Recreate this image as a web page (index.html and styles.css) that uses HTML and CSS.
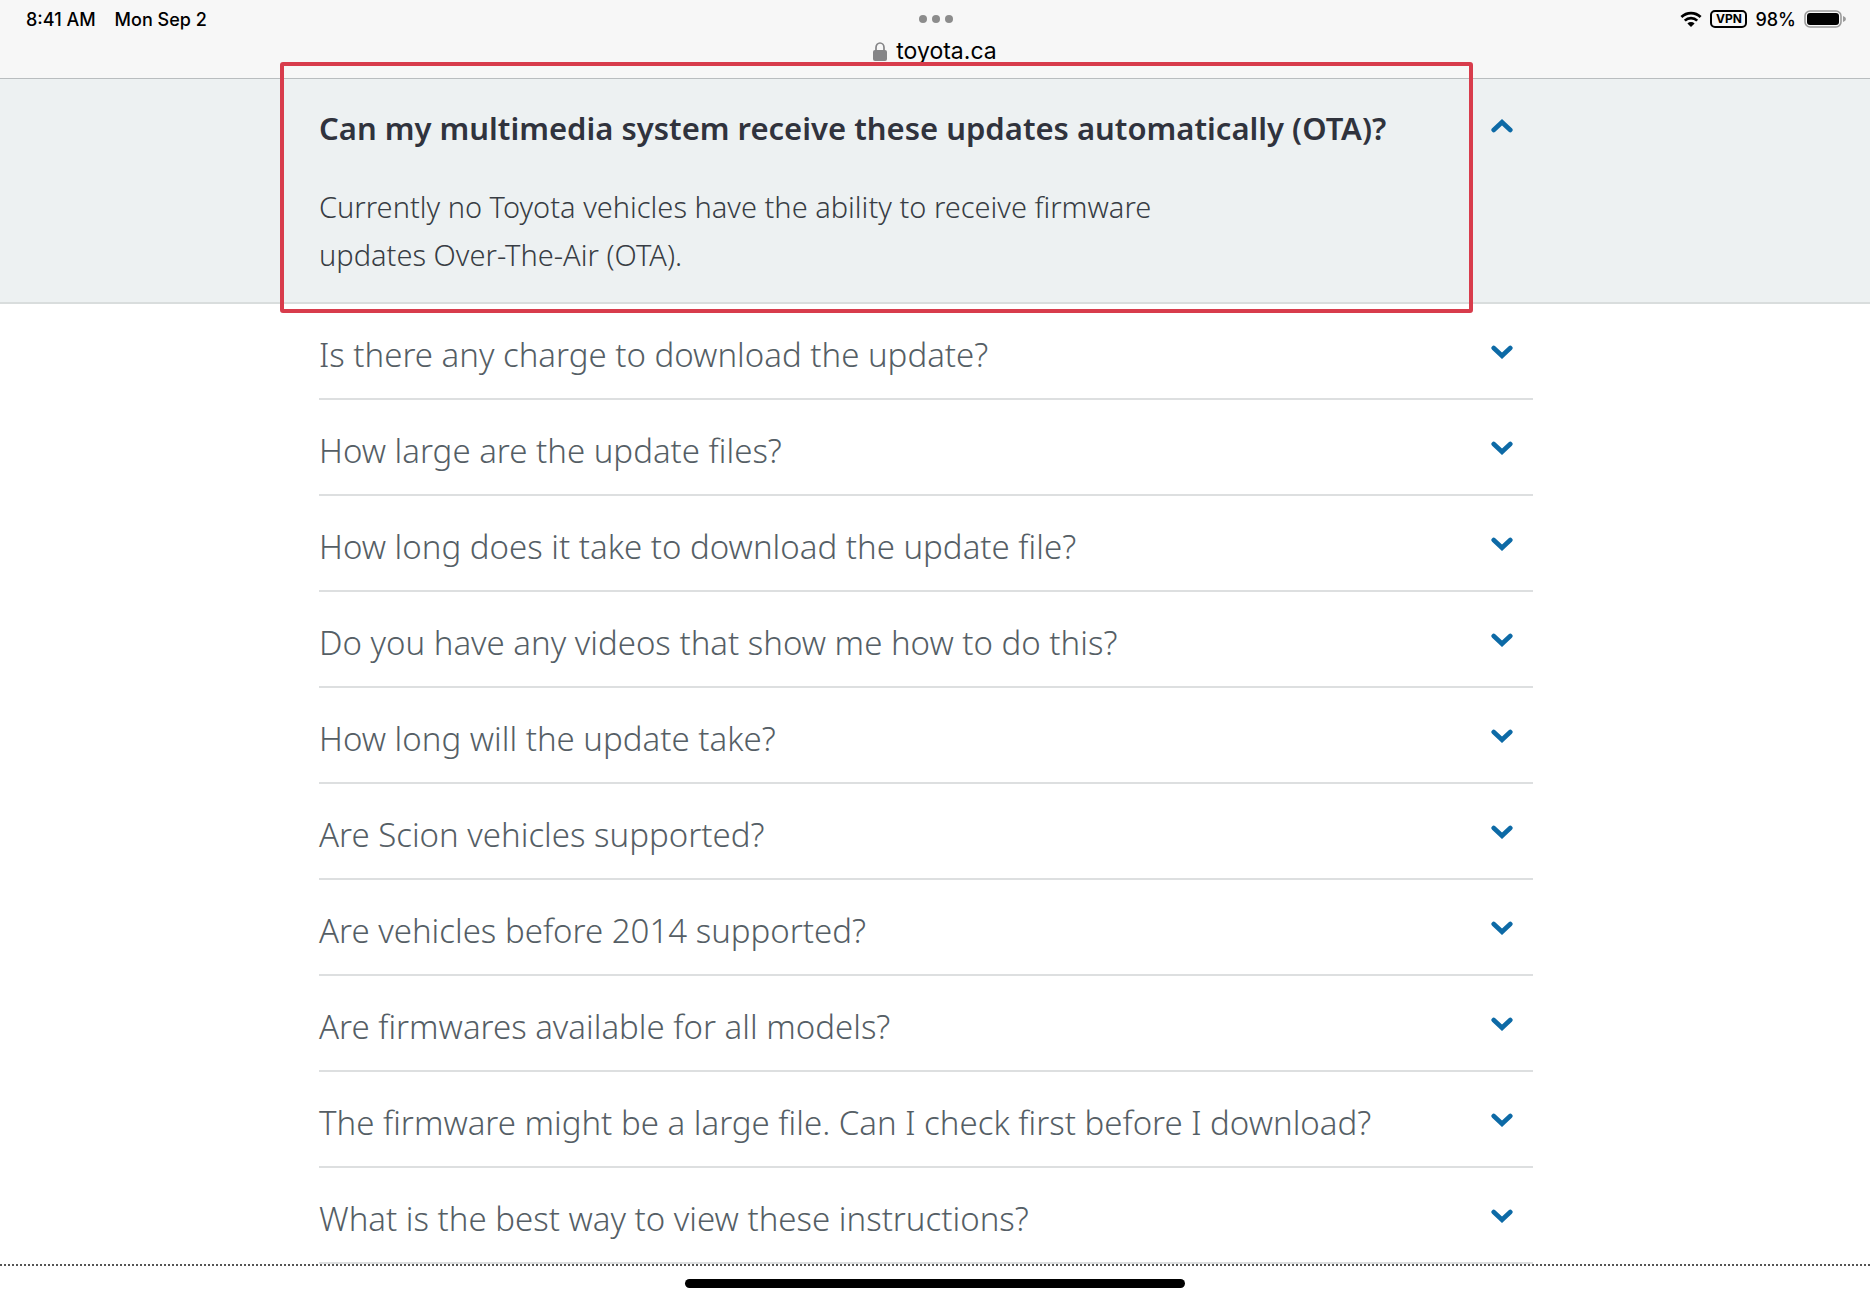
FILE: index.html
```
<!DOCTYPE html>
<html lang="en">
<head>
<meta charset="utf-8">
<meta name="viewport" content="width=device-width, initial-scale=1">
<title>toyota.ca</title>
<link rel="stylesheet" href="styles.css">
</head>
<body>
<svg class="sprite" aria-hidden="true">
  <symbol id="chevron" viewBox="0 0 22 14">
    <path d="M2.7 3 11 10.8 19.3 3" fill="none" stroke="currentColor" stroke-width="4.6" stroke-linecap="round"/>
  </symbol>
</svg>

<header class="browser-bar">
  <div class="status">
    <div class="status-left"><span>8:41 AM</span><span>Mon Sep 2</span></div>
    <button class="dots" aria-label="Window controls"><i></i><i></i><i></i></button>
    <div class="status-right">
      <svg class="wifi" viewBox="0 0 22 16" aria-label="Wi-Fi">
        <path d="M1.4 6A13.6 13.6 0 0 1 20.6 6M4.8 9.6A8.8 8.8 0 0 1 17.2 9.6" fill="none" stroke="#000" stroke-width="2.7"/>
        <path d="M11 16 7.4 12.4A5.1 5.1 0 0 1 14.6 12.4Z" fill="#000"/>
      </svg>
      <span class="vpn">VPN</span>
      <span>98%</span>
      <svg class="battery" viewBox="0 0 42 18" aria-hidden="true">
        <rect x="1" y="1" width="36" height="16" rx="5" fill="none" stroke="#9b9b9b" stroke-width="1.6"/>
        <rect x="3" y="3" width="32" height="12" rx="3" fill="#000"/>
        <path d="M39 6q3 .8 3 3t-3 3Z" fill="#9b9b9b"/>
      </svg>
    </div>
  </div>
  <div class="address">
    <svg class="lock" viewBox="0 0 14 19" aria-hidden="true">
      <rect y="8" width="14" height="11" rx="2" fill="#858587"/>
      <path d="M3 9V5.400a4 4.400 0 0 1 8 0V9" fill="none" stroke="#858587" stroke-width="1.700"/>
    </svg>
    <span>toyota.ca</span>
  </div>
</header>

<main class="faq">
  <section class="open-item">
    <div class="inner">
      <div class="marked">
        <h2><button class="question" aria-expanded="true" aria-controls="answer">
          <span>Can my multimedia system receive these updates automatically (OTA)?</span>
          <svg class="chevron up"><use href="#chevron"/></svg>
        </button></h2>
        <p id="answer">Currently no Toyota vehicles have the ability to receive firmware updates Over-The-Air (OTA).</p>
      </div>
    </div>
  </section>
  <div class="inner">
    <button class="row"><span>Is there any charge to download the update?</span><svg class="chevron"><use href="#chevron"/></svg></button>
    <button class="row"><span>How large are the update files?</span><svg class="chevron"><use href="#chevron"/></svg></button>
    <button class="row"><span>How long does it take to download the update file?</span><svg class="chevron"><use href="#chevron"/></svg></button>
    <button class="row"><span>Do you have any videos that show me how to do this?</span><svg class="chevron"><use href="#chevron"/></svg></button>
    <button class="row"><span>How long will the update take?</span><svg class="chevron"><use href="#chevron"/></svg></button>
    <button class="row"><span>Are Scion vehicles supported?</span><svg class="chevron"><use href="#chevron"/></svg></button>
    <button class="row"><span>Are vehicles before 2014 supported?</span><svg class="chevron"><use href="#chevron"/></svg></button>
    <button class="row"><span>Are firmwares available for all models?</span><svg class="chevron"><use href="#chevron"/></svg></button>
    <button class="row"><span>The firmware might be a large file. Can I check first before I download?</span><svg class="chevron"><use href="#chevron"/></svg></button>
    <button class="row"><span>What is the best way to view these instructions?</span><svg class="chevron"><use href="#chevron"/></svg></button>
  </div>
</main>
<footer class="page-end"><div class="home-indicator"></div></footer>
</body>
</html>
```
FILE: styles.css
```
* { box-sizing: border-box; }

body {
  margin: 0;
  background: #fff;
  color: #555e65;
  font-family: "Noto Sans", "Open Sans", sans-serif;
}

button {
  border: 0;
  padding: 0;
  background: none;
  color: inherit;
  font: inherit;
  text-align: left;
  cursor: pointer;
}

h2, p { margin: 0; }

.sprite { position: absolute; width: 0; height: 0; }

/* Browser bar */
.browser-bar {
  height: 79px;
  border-bottom: 1px solid #b9bdbf;
  background: #f7f7f7;
  color: #000;
  font-family: Inter, "Liberation Sans", sans-serif;
}

.status {
  display: grid;
  grid-template-columns: 1fr auto 1fr;
  align-items: center;
  height: 38px;
  padding: 0 24px 0 26px;
  font-size: 18px;
  font-weight: 500;
}

.status-left { display: flex; gap: 19px; }

.status-right {
  display: flex;
  align-items: center;
  justify-content: flex-end;
  gap: 8px;
}

.dots { display: flex; gap: 5px; }
.dots i { width: 8px; height: 8px; border-radius: 50%; background: #8c8c8c; }

.wifi { width: 22px; height: 16px; }
.battery { width: 42px; height: 18px; }

.vpn {
  width: 37px;
  height: 18px;
  border: 2px solid #000;
  border-radius: 5px;
  font-size: 12px;
  font-weight: 700;
  line-height: 14px;
  text-align: center;
}

.address {
  display: flex;
  align-items: center;
  justify-content: center;
  gap: 9px;
  height: 26px;
  font-size: 23px;
  line-height: 26px;
}

.lock { width: 14px; height: 19px; }

/* Questions */
.inner {
  width: 100%;
  max-width: 1232px;
  margin: 0 auto;
  padding-right: 18px;
}

.open-item {
  border-bottom: 2px solid #d9dddd;
  background: #edf1f2;
  color: #30333d;
}

.marked { position: relative; padding: 23px 0; }

/* Highlight frame, drawn over the bar and the panel edges */
.marked::after {
  content: "";
  position: absolute;
  inset: -17px 60px -11px -39px;
  border: 4px solid #d83c4c;
  border-radius: 3px;
  pointer-events: none;
}

.question, .row {
  display: flex;
  align-items: center;
  justify-content: space-between;
  width: 100%;
}

.question {
  height: 52px;
  font-size: 31px;
  font-weight: 600;
  line-height: 52px;
}

.marked p {
  max-width: 900px;
  margin-top: 29px;
  color: #383d44;
  font-size: 29px;
  font-weight: 300;
  line-height: 48px;
}

.row {
  height: 96px;
  padding-top: 6px;
  border-bottom: 2px solid #dddfe0;
  font-size: 33px;
  font-weight: 300;
}

.chevron {
  flex: none;
  width: 22px;
  height: 14px;
  margin: 0 20px 5px 0;
  color: #0d6aa6;
}

.chevron.up { transform: rotate(180deg); }

.page-end {
  display: flex;
  justify-content: center;
  padding: 13px 0 12px;
  border-top: 2px dotted #555;
}

.home-indicator {
  width: 100%;
  max-width: 500px;
  height: 9px;
  border-radius: 5px;
  background: #000;
}
```
